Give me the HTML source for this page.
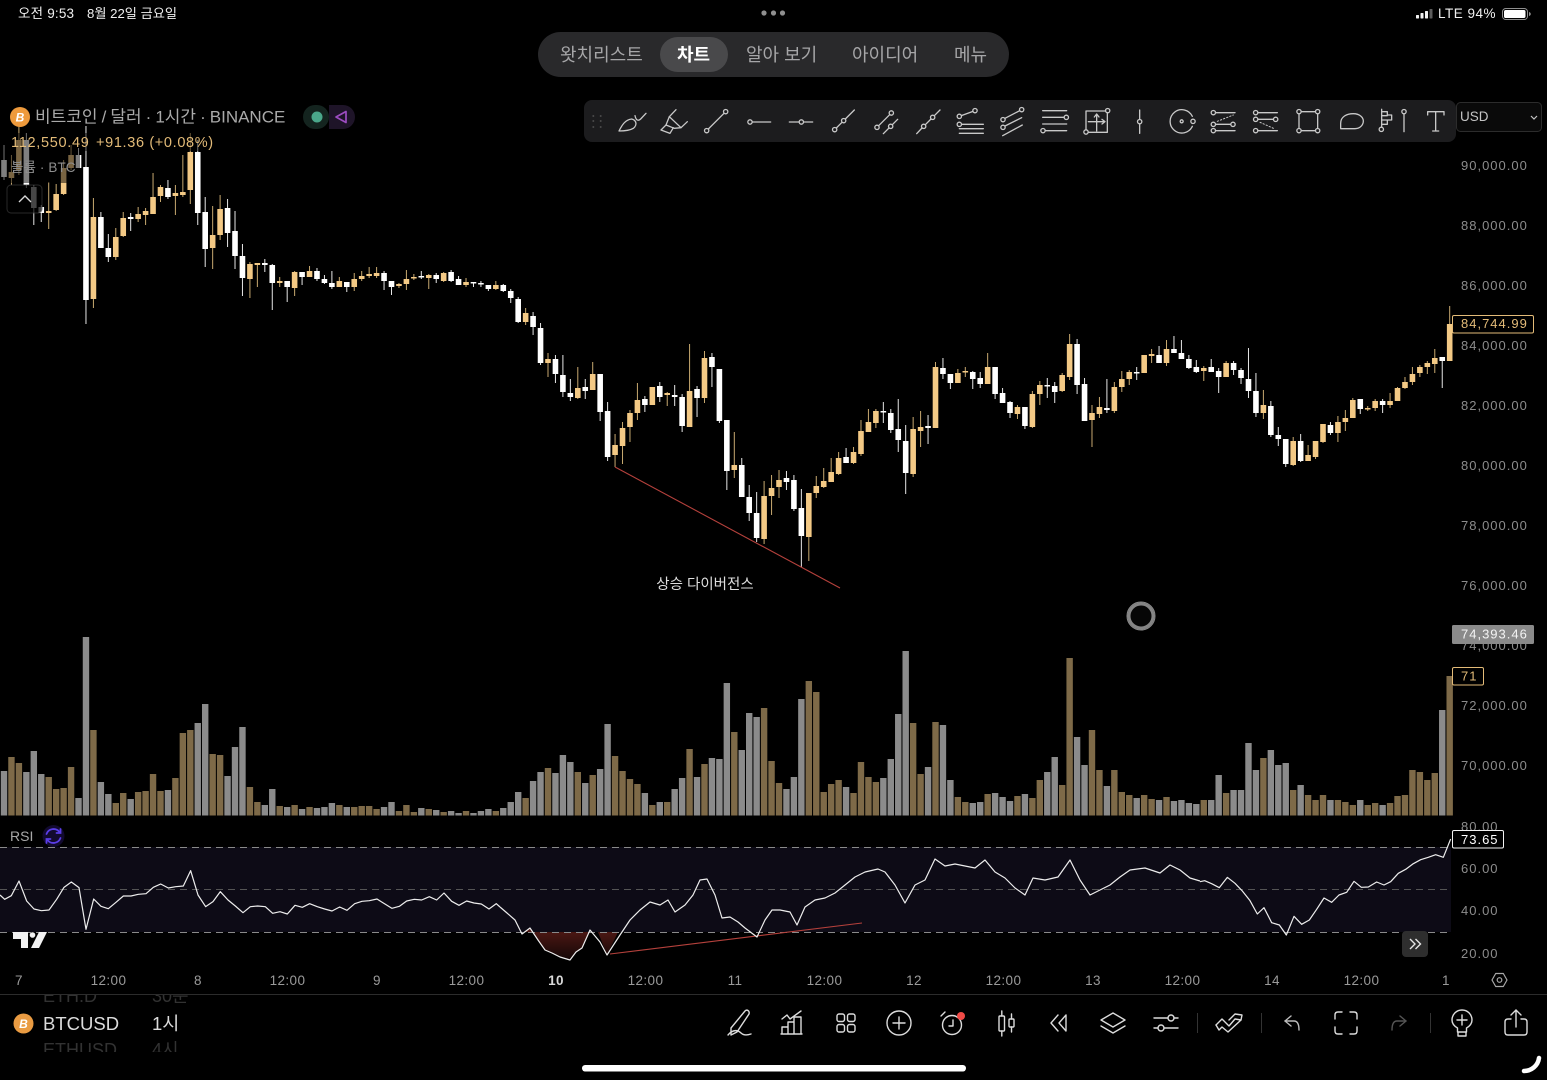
<!DOCTYPE html>
<html lang="ko">
<head>
<meta charset="utf-8">
<title>BTCUSD</title>
<style>
html,body{margin:0;padding:0;background:#000;width:1547px;height:1080px;overflow:hidden}
svg{display:block;position:absolute;left:0;top:0}
text{font-family:"Liberation Sans","Noto Sans CJK KR",sans-serif}
.ax{font-size:13px;fill:#8c8c8c;letter-spacing:1px}
.tm{font-size:13.5px;fill:#9a9a9a;text-anchor:middle;letter-spacing:.4px}
.nav{font-size:18px;fill:#a6a6a8}
.ic{fill:none;stroke:#c9c9c9;stroke-width:3.9;stroke-linecap:round;stroke-linejoin:round}
.bi{fill:none;stroke:#dcdcdc;stroke-width:1.4;stroke-linecap:round;stroke-linejoin:round}
</style>
</head>
<body>
<svg width="1547" height="1080" viewBox="0 0 1547 1080" xmlns="http://www.w3.org/2000/svg">
<defs>
<linearGradient id="rd" x1="0" y1="0" x2="0" y2="1"><stop offset="0" stop-color="#521a15"/><stop offset="1" stop-color="#140707"/></linearGradient>
</defs>
<rect width="1547" height="1080" fill="#000"/>

<!-- RSI band -->
<rect x="0" y="847" width="1451" height="85" fill="#0d0b16"/>
<path d="M524 932 L530 928 L538 940 L545 950 L552 953 L560 957 L570 960 L576 952 L582 948 L590 932 L598 932 L607 955 L618 932 Z" fill="url(#rd)"/>
<g stroke="#8a8a8a" stroke-width="1" stroke-dasharray="7 5" fill="none">
<path d="M0 847.5H1451"/><path d="M0 932.5H1451"/>
</g>
<path d="M0 889.5H1451" stroke="#555" stroke-width="1" stroke-dasharray="7 5" fill="none"/>

<!-- candles + volume -->
<path id="vW" fill="#8b8b8b"/>
<path id="vO" fill="#7e6a48"/>
<path id="wW" stroke="#e6e6e6" stroke-width="1" fill="none"/>
<path id="wO" stroke="#c8a970" stroke-width="1" fill="none"/>
<path id="bW" fill="#fff"/>
<path id="bO" fill="#f3c985"/>

<!-- divergence lines -->
<path d="M615 467 L840 588" stroke="#b5413c" stroke-width="1.1" fill="none"/>
<path d="M610 954 L862 923" stroke="#b5413c" stroke-width="1.1" fill="none"/>
<text x="705" y="589" font-size="14.5" fill="#dedede" text-anchor="middle">상승 다이버전스</text>

<!-- RSI lines -->
<g transform="translate(0,815) scale(.33333)">
<polyline fill="none" stroke="#ededed" stroke-width="3.6" stroke-linejoin="round" points="0,240 14,253 34,242 57,198 80,258 102,282 124,287 147,285 170,253 192,217 214,201 237,218 258,343 281,252 303,274 325,281 348,262 370,243 393,243 415,238 438,236 460,217 482,207 505,219 527,215 550,213 572,167 594,240 617,275 639,260 661,230 684,255 706,273 729,293 751,275 773,273 796,275 818,295 840,290 862,297 885,271 907,277 929,266 952,275 974,282 996,288 1019,276 1041,286 1064,266 1086,259 1108,257 1131,252 1153,266 1176,280 1198,274 1220,258 1243,253 1265,255 1288,245 1310,255 1332,234 1355,259 1377,271 1400,258 1422,264 1444,267 1467,282 1489,266 1500,276"/>
</g>
<polyline fill="none" stroke="#ededed" stroke-width="1.2" stroke-linejoin="round" points="500,907 507,913 515,920 522,934 530,928 538,940 545,950 552,953 560,957 570,960 576,952 582,948 590,930 600,942 607,955 620,935 630,920 640,910 650,902 660,905 668,900 675,912 685,905 693,895 700,880 707,879 715,895 722,918 730,917 738,922 745,928 757,937 765,920 772,910 780,910 790,912 797,925 805,907 815,900 825,898 835,893 845,885 855,877 865,872 878,869 885,872 895,885 905,903 915,885 925,880 935,859 945,866 955,864 965,866 975,868 985,860 995,872 1005,878 1015,888 1025,895 1033,878 1045,880 1058,877 1070,860 1080,880 1090,895 1100,890 1110,885 1120,877 1130,870 1145,868 1160,873 1170,865 1180,870 1190,878 1200,881"/>
<g transform="translate(1200,815) scale(.33333)">
<polyline fill="none" stroke="#ededed" stroke-width="3.6" stroke-linejoin="round" points="0,200 14,197 35,206 58,218 82,187 105,205 127,228 150,257 172,297 192,278 215,323 238,330 259,360 282,304 305,328 328,315 350,283 372,249 395,262 417,240 440,232 462,199 484,217 505,216 530,201 552,210 572,200 595,175 617,163 640,146 662,134 685,127 707,119 730,127 752,72"/>
</g>

<!-- dim overlays under legend -->
<rect x="80" y="133" width="135" height="18" fill="#000" opacity=".5"/>
<rect x="0" y="133" width="80" height="50" fill="#000" opacity=".5"/>
<rect x="7" y="185" width="35" height="28" rx="4" fill="#000" opacity=".72" stroke="#3a3a3a" stroke-width="1"/>
<path d="M19 202 L25 196 L31 202" fill="none" stroke="#d8d8d8" stroke-width="1.4"/>

<!-- status bar -->
<text x="18" y="18" font-size="13.5" fill="#f0f0f0" letter-spacing=".2">오전 9:53</text>
<text x="87" y="18" font-size="13.2" fill="#f0f0f0">8월 22일 금요일</text>
<g fill="#8f8f8f"><circle cx="764" cy="13" r="2.6"/><circle cx="773.5" cy="13" r="2.6"/><circle cx="782.5" cy="13" r="2.6"/></g>
<g fill="#f0f0f0"><rect x="1416" y="15" width="3" height="3.5" rx=".6"/><rect x="1420.5" y="13" width="3" height="5.5" rx=".6"/><rect x="1425" y="11" width="3" height="7.5" rx=".6"/></g>
<rect x="1429.5" y="9" width="3" height="9.5" rx=".6" fill="#5c5c5c"/>
<text x="1438" y="18" font-size="13.5" fill="#f0f0f0" letter-spacing=".5">LTE 94%</text>
<rect x="1502.5" y="8.5" width="25" height="11" rx="3.2" fill="none" stroke="#8f8f8f"/>
<rect x="1504" y="10" width="21.5" height="8" rx="1.8" fill="#fff"/>
<path d="M1529 12v4c1-.3 1.8-1 1.8-2s-.8-1.700-1.800-2z" fill="#8f8f8f"/>

<!-- nav pill -->
<rect x="538" y="32" width="471" height="45" rx="22.500" fill="#29292b"/>
<rect x="660" y="37" width="68" height="35" rx="17.500" fill="#49494b"/>
<text x="560" y="61" class="nav">왓치리스트</text>
<text x="677" y="61" font-size="18" font-weight="700" fill="#fff">차트</text>
<text x="746" y="61" class="nav">알아 보기</text>
<text x="852" y="61" class="nav">아이디어</text>
<text x="954" y="61" class="nav">메뉴</text>

<!-- legend -->
<circle cx="20" cy="117" r="10" fill="#ee9a3c"/>
<text x="20" y="121.500" font-size="12" font-weight="700" font-style="italic" fill="#fff" text-anchor="middle">B</text>
<text x="35" y="122.500" font-size="17" fill="#a9a9a9" word-spacing="-.7">비트코인 / 달러 · 1시간 · BINANCE</text>
<rect x="303" y="105" width="26" height="24" rx="12" fill="#14241f"/>
<path d="M329 105h14a12 12 0 0 1 0 24h-14z" fill="#1e1428"/>
<circle cx="317" cy="117" r="5.500" fill="#4aa78a"/>
<path d="M346 111.500 L336 117 L346 122.500 Z" fill="none" stroke="#9c4cc0" stroke-width="1.700" stroke-linejoin="round"/>
<text x="11" y="147" font-size="14.500" fill="#e3bb78" letter-spacing=".7">112,550.49</text>
<text x="96" y="147" font-size="14.500" fill="#e3bb78" letter-spacing=".65">+91.36 (+0.08%)</text>
<text x="11" y="172" font-size="13.500" fill="#8f8f8f" letter-spacing=".1">볼륨 · BTC</text>

<!-- toolbar -->
<rect x="584" y="100" width="872" height="42" rx="8" fill="#1c1c1e"/>
<g fill="#4a4a4a"><circle cx="593.300" cy="116" r="1"/><circle cx="600.700" cy="116" r="1"/><circle cx="593.300" cy="121" r="1"/><circle cx="600.700" cy="121" r="1"/><circle cx="593.300" cy="127" r="1"/><circle cx="600.700" cy="127" r="1"/></g>
<g transform="translate(580,95) scale(.33333)" class="ic">
<!-- brush -->
<path d="M117 108 C125 92 135 74 155 72 C170 76 172 90 160 100 C150 106 130 108 117 108 Z"/>
<path d="M165 62 C168 78 176 78 182 72 L198 55"/>
<!-- highlighter -->
<path d="M288 44 L268 65 L258 90 L283 100 L303 98 L322 80"/><path d="M268 65 L303 98"/><path d="M258 90 L243 105 L270 115 L280 98"/>
<!-- trend -->
<circle cx="380" cy="107" r="6.500"/><circle cx="437" cy="50" r="6.500"/><path d="M385 102 L432 55"/>
<!-- ray -->
<circle cx="510" cy="81" r="6.500"/><path d="M517 81 H572"/>
<!-- horizontal -->
<circle cx="664" cy="81" r="6.500"/><path d="M628 81 H657 M671 81 H698"/>
<!-- ext -->
<circle cx="764" cy="104" r="6.500"/><circle cx="791" cy="77" r="6.500"/><path d="M769 99 L786 82 M796 72 L823 45"/>
<!-- parallel -->
<circle cx="891" cy="97" r="6.500"/><circle cx="934" cy="54" r="6.500"/><path d="M896 92 L929 59"/><circle cx="932" cy="94" r="6.500"/><path d="M910 116 L927 99 M937 89 L953 73"/>
<!-- extended 2 -->
<circle cx="1031" cy="94" r="6.500"/><circle cx="1058" cy="67" r="6.500"/><path d="M1010 116 L1026 99 M1036 89 L1053 72 M1063 62 L1080 45"/>
<!-- fib -->
<circle cx="1138" cy="64" r="6.500"/><circle cx="1185" cy="47" r="6.500"/><path d="M1144 62 L1179 49"/><circle cx="1138" cy="88" r="6.500"/><path d="M1145 88 H1210 M1138 101 H1210 M1138 115 H1210"/>
<!-- channel -->
<circle cx="1269" cy="74" r="6.500"/><circle cx="1325" cy="44" r="6.500"/><circle cx="1269" cy="97" r="6.500"/><path d="M1275 70 L1319 47 M1275 93 L1325 68 M1268 122 L1327 90"/>
<!-- lines -->
<path d="M1388 47 H1460 M1388 67 H1452 M1388 87 H1460 M1396 107 H1460"/><circle cx="1459" cy="67" r="6.500"/><circle cx="1389" cy="107" r="6.500"/>
</g>
<g transform="translate(1070,95) scale(.33333)" class="ic">
<path d="M107 48 H48 V105 M54 112 H112 V53"/><circle cx="113" cy="47" r="6.500"/><circle cx="48" cy="111" r="6.500"/><path d="M80 108 V57 M73 66 L80 57 L87 66 M55 80 H105 M96 73 L105 80 L96 87"/>
<path d="M209 45 V73 M209 87 V115"/><circle cx="209" cy="80" r="6.500"/>
<path d="M367 64 A35 35 0 1 0 367 94"/><circle cx="335" cy="79" r="4.500"/><circle cx="369" cy="79" r="6.500"/>
<circle cx="430" cy="53" r="6.500"/><path d="M437 53 H495"/><circle cx="430" cy="88" r="6.500"/><circle cx="489" cy="88" r="6.500"/><path d="M437 88 H482"/><circle cx="430" cy="107" r="6.500"/><path d="M437 107 H495"/><path d="M442 79 L490 60" stroke-dasharray="4 6" stroke-width="3"/>
<circle cx="557" cy="53" r="6.500"/><path d="M564 53 H622"/><circle cx="557" cy="73" r="6.500"/><circle cx="617" cy="73" r="6.500"/><path d="M564 73 H610"/><circle cx="557" cy="107" r="6.500"/><path d="M564 107 H622"/><path d="M570 82 L615 102" stroke-dasharray="4 6" stroke-width="3"/>
<circle cx="687" cy="50" r="6.500"/><circle cx="743" cy="50" r="6.500"/><circle cx="687" cy="107" r="6.500"/><circle cx="743" cy="107" r="6.500"/><path d="M694 50 H736 M694 107 H736 M687 57 V100 M743 57 V100"/>
<path d="M812 101 V85 C812 65 830 56 850 56 C870 56 880 68 880 78 C880 90 870 101 855 101 Z"/>
<path d="M935 43 V96"/><circle cx="934" cy="103" r="6.500"/><path d="M935 50 H952 V60 H965 V75 H952 V88 H935 M935 62 H952 M935 75 H952"/>
<circle cx="1002" cy="50" r="6.500"/><path d="M1002 57 V110"/>
<path d="M1073 60 V50 H1122 V60 M1097 50 V108 M1088 108 H1106"/>
</g>
<rect x="1456.500" y="102.500" width="85" height="29" rx="4" fill="#0a0a0a" stroke="#2c2c2c"/>
<text x="1460" y="121" font-size="13.500" fill="#c4c4c4">USD</text>
<path d="M1531 116 L1534 119 L1537 116" fill="none" stroke="#c4c4c4" stroke-width="1.200"/>

<!-- price axis -->
<g class="ax">
<text x="1461" y="170">90,000.00</text><text x="1461" y="230">88,000.00</text><text x="1461" y="290">86,000.00</text><text x="1461" y="350">84,000.00</text><text x="1461" y="410">82,000.00</text><text x="1461" y="470">80,000.00</text><text x="1461" y="530">78,000.00</text><text x="1461" y="590">76,000.00</text><text x="1461" y="650">74,000.00</text><text x="1461" y="710">72,000.00</text><text x="1461" y="770">70,000.00</text>
<text x="1461" y="831">80.00</text><text x="1461" y="873">60.00</text><text x="1461" y="915">40.00</text><text x="1461" y="958">20.00</text>
</g>
<rect x="1452.500" y="315.500" width="81" height="17.500" rx="1.500" fill="#000" stroke="#e3bb78"/>
<text x="1461" y="328" font-size="13" fill="#e3bb78" letter-spacing="1">84,744.99</text>
<rect x="1452" y="625" width="82" height="19" rx="1.500" fill="#8a8a8a"/>
<text x="1461" y="638.500" font-size="13" fill="#f4f4f4" letter-spacing="1">74,393.46</text>
<rect x="1452.500" y="667.500" width="31" height="17.500" rx="1.500" fill="#000" stroke="#e3bb78"/>
<text x="1461" y="680.500" font-size="13" fill="#e3bb78" letter-spacing="1">71</text>
<rect x="1452.500" y="830.500" width="51" height="17.500" rx="1.500" fill="#000" stroke="#f2f2f2"/>
<text x="1461" y="844" font-size="13" fill="#fff" letter-spacing="1">73.65</text>

<!-- RSI label -->
<text x="10" y="841" font-size="14" fill="#a8a8a8">RSI</text>
<circle cx="53.500" cy="836" r="11" fill="#120a2e"/>
<g fill="none" stroke="#5a3de6" stroke-width="1.800" stroke-linecap="round">
<path d="M46.500 834 A7.500 7.500 0 0 1 59.500 832"/><path d="M60.500 838 A7.500 7.500 0 0 1 47.500 840"/>
<path d="M60.500 829 V833 H56.500"/><path d="M46.500 843 V839 H50.500"/>
</g>
<!-- TV logo -->
<path d="M13 932 H28 V948 H21 V939 H13 Z M39 932 H47 L39 948 H31 Z" fill="#f2f2f2"/>
<circle cx="32.500" cy="935" r="2.800" fill="#f2f2f2"/>
<!-- >> button -->
<rect x="1402" y="931" width="26" height="26" rx="4" fill="#2e2e2e"/>
<path d="M1410 939 L1415 944 L1410 949 M1415.500 939 L1420.500 944 L1415.500 949" fill="none" stroke="#e6e6e6" stroke-width="1.400"/>

<!-- time axis -->
<g class="tm">
<text x="19" y="985">7</text><text x="108.500" y="985">12:00</text><text x="198" y="985">8</text><text x="287.500" y="985">12:00</text><text x="377" y="985">9</text><text x="466.500" y="985">12:00</text>
<text x="556" y="985" font-weight="700" style="fill:#d8d8d8">10</text>
<text x="645.500" y="985">12:00</text><text x="735" y="985">11</text><text x="824.500" y="985">12:00</text><text x="914" y="985">12</text><text x="1003.500" y="985">12:00</text><text x="1093" y="985">13</text><text x="1182.500" y="985">12:00</text><text x="1272" y="985">14</text><text x="1361.500" y="985">12:00</text><text x="1446" y="985">1</text>
</g>
<path d="M1492 980 L1495.700 973.500 H1503.300 L1507 980 L1503.300 986.500 H1495.700 Z" fill="none" stroke="#a8a8a8" stroke-width="1.200" stroke-linejoin="round"/>
<circle cx="1499.500" cy="980" r="2.300" fill="none" stroke="#a8a8a8" stroke-width="1.200"/>

<!-- bottom bar -->
<rect x="0" y="994" width="1547" height="1" fill="#2c2c2c"/>
<svg x="0" y="995" width="400" height="57" viewBox="0 995 400 57">
<text x="43" y="1002" font-size="18" fill="#323232">ETH.D</text><text x="152" y="1002" font-size="18" fill="#323232">30분</text>
<text x="43" y="1056" font-size="18" fill="#323232">ETHUSD</text><text x="152" y="1056" font-size="18" fill="#323232">4시</text>
</svg>
<circle cx="23.500" cy="1023.500" r="10" fill="#e99b42"/>
<text x="23.500" y="1028" font-size="12" font-weight="700" font-style="italic" fill="#fff" text-anchor="middle">B</text>
<text x="43" y="1030" font-size="18.500" fill="#dcdcdc">BTCUSD</text>
<text x="152" y="1030" font-size="18.500" fill="#dcdcdc">1시</text>

<g class="bi">
<g transform="translate(739,1023)"><path d="M6 -12 C8 -14 11 -12 10 -9 L-2 9 L-8 12 L-8 5 Z"/><path d="M-11 12 C-6 6 -1 7 2 10 C5 13 9 12 12 11"/></g>
<g transform="translate(792,1023)"><path d="M-10 -4 L-5 -8 L-2 -4 L9 -12"/><path d="M-10 11 V4 H-4 V11 M-4 11 V-1 H2 V11 M2 11 V-6 H9 V11 M-11 11 H10"/></g>
<g transform="translate(846,1023)"><rect x="-9" y="-9" width="7.500" height="7.500" rx="2"/><rect x="1.500" y="-9" width="7.500" height="7.500" rx="2"/><rect x="-9" y="1.500" width="7.500" height="7.500" rx="2"/><rect x="1.500" y="1.500" width="7.500" height="7.500" rx="2"/></g>
<g transform="translate(899,1023)"><circle r="12"/><path d="M-6 0 H6 M0 -6 V6"/></g>
<g transform="translate(952,1023)"><circle cy="2" r="9.500"/><path d="M1 -3 V3 H-3"/><path d="M-11 -7 L-7 -11"/></g>
<g transform="translate(1006,1023)"><rect x="-7" y="-7" width="5.500" height="15" rx="1"/><path d="M-4.200 -12 V-7 M-4.200 8 V13"/><rect x="3" y="-4" width="5" height="8" rx="1"/><path d="M5.500 -9 V-4 M5.500 4 V9"/></g>
<g transform="translate(1059,1023)"><path d="M-1 -8 L-8 0 L-1 8"/><path d="M7 -8 L0 0 L7 8 Z"/></g>
<g transform="translate(1113,1023)"><path d="M0 -10 L12 -3 L0 4 L-12 -3 Z"/><path d="M-12 3 L0 10 L12 3"/></g>
<g transform="translate(1166,1023)"><path d="M-12 -5 H2 M8 -5 H12"/><circle cx="5" cy="-5" r="3"/><path d="M-12 5 H-8 M-2 5 H12"/><circle cx="-5" cy="5" r="3"/></g>
<g transform="translate(1229,1023)"><path d="M-13 2 L-7 -4 L0 3 L6 -4 L12 -3 L13 -8 L6 -9 L0 -3"/><path d="M-13 2 L-10 7 L-7 4 L-1 9 L12 -3"/></g>
<g transform="translate(1292,1023)" style="stroke:#bcbcbc"><path d="M-1 -7 L-7 -2 L-1 3"/><path d="M-7 -2 H2 C6 -2 7 2 7 7"/></g>
<g transform="translate(1346,1023)"><path d="M-4 -11 H-8 Q-11 -11 -11 -8 V-4 M4 -11 H8 Q11 -11 11 -8 V-4 M-4 11 H-8 Q-11 11 -11 8 V4 M4 11 H8 Q11 11 11 8 V4"/></g>
<g transform="translate(1399,1023)" style="stroke:#555"><path d="M1 -7 L7 -2 L1 3"/><path d="M7 -2 H-2 C-6 -2 -7 2 -7 7"/></g>
<g transform="translate(1462,1023)"><path d="M-4.500 5 C-8 3 -10 0 -10 -3 A10 10 0 0 1 10 -3 C10 0 8 3 4.500 5 V9 H-4.500 Z"/><path d="M-5 -3 H5 M0 -8 V2"/><path d="M-4 9 V13 H4 V9"/></g>
<g transform="translate(1516,1023)"><path d="M0 -13 V4 M-5 -8 L0 -13 L5 -8"/><path d="M-5 -4 H-8 Q-11 -4 -11 -1 V9 Q-11 12 -8 12 H8 Q11 12 11 9 V-1 Q11 -4 8 -4 H5"/></g>
</g>
<circle cx="961" cy="1016" r="4" fill="#f04a46"/>
<rect x="1197" y="1013" width="1" height="20" fill="#333"/>
<rect x="1261" y="1013" width="1" height="20" fill="#333"/>
<rect x="1430" y="1013" width="1" height="20" fill="#333"/>

<!-- cursor ring -->
<circle cx="1141" cy="616" r="12" fill="#060606" stroke="#858585" stroke-width="3"/>
<circle cx="1141" cy="616" r="14" fill="none" stroke="#c8c8c8" stroke-width="1" opacity=".7"/>

<!-- home bar -->
<rect x="582" y="1065" width="384" height="6.500" rx="3.200" fill="#fff"/>
<path d="M1539 1058 C1538 1066 1531 1071 1524 1071" fill="none" stroke="#fff" stroke-width="4.500" stroke-linecap="round"/>
</svg>
<script>
var C=[[160,177,145,180,0],[172,178,155,185,1],[140,170,127,175,1],[140,185,133,188,0],[187,208,185,225,0],[207,213,205,222,0],[211,213,182,229,1],[194,210,184,211,1],[168,194,160,195,1],[155,168,145,170,1],[155,168,148,168,0],[167,300,126,324,0],[217,299,198,308,1],[217,248,212,248,0],[248,257,234,262,0],[237,257,228,260,1],[218,236,212,237,1],[217,219,213,231,0],[214,219,207,222,1],[211,215,208,225,1],[197,214,173,214,1],[187,196,185,202,1],[188,197,180,199,0],[193,196,185,215,1],[192,195,155,197,1],[152,190,133,204,1],[152,213,140,225,0],[212,249,197,267,0],[235,248,206,269,1],[209,235,195,240,1],[208,233,199,247,0],[231,256,211,269,0],[256,278,244,296,0],[264,279,262,298,1],[263,265,263,287,1],[263,265,259,272,0],[265,283,264,310,0],[281,283,277,287,1],[281,287,281,302,0],[272,288,271,296,1],[272,277,272,285,0],[271,277,266,277,1],[271,279,268,281,0],[279,283,275,284,0],[283,287,271,289,0],[281,287,277,287,1],[282,287,282,292,0],[279,287,273,291,1],[276,279,271,281,1],[274,276,267,278,1],[273,276,267,278,1],[273,281,271,290,0],[281,287,281,295,0],[284,286,283,288,1],[279,284,270,290,1],[277,278,274,280,1],[276,277,271,279,0],[275,278,274,289,1],[275,279,273,283,0],[273,281,272,282,1],[272,281,270,282,0],[279,285,276,285,0],[282,285,278,287,1],[282,283,282,287,0],[283,284,281,287,0],[285,289,285,291,0],[285,289,281,290,1],[285,291,284,292,0],[291,298,289,303,0],[299,322,297,323,0],[313,322,308,325,1],[316,327,312,335,0],[328,363,323,365,0],[359,363,353,377,1],[359,374,355,383,0],[375,392,355,397,0],[393,397,379,401,0],[388,398,367,399,1],[387,391,379,399,0],[374,390,362,390,1],[374,412,374,421,0],[411,457,402,461,0],[445,455,434,467,1],[428,446,422,464,1],[413,427,410,442,1],[400,413,383,420,1],[399,405,396,412,0],[387,405,387,405,1],[386,397,382,402,0],[393,395,392,406,1],[395,397,385,406,0],[397,426,394,432,0],[391,427,344,427,1],[389,398,386,417,0],[358,398,351,403,1],[357,367,353,387,0],[369,421,369,423,0],[420,471,420,490,0],[465,470,432,478,1],[465,497,458,497,0],[497,513,485,521,0],[513,538,492,542,0],[496,539,481,544,1],[488,496,475,515,1],[480,487,470,498,1],[478,482,471,490,0],[480,509,475,511,0],[508,536,489,567,0],[493,537,493,561,1],[486,493,476,498,1],[481,487,468,488,1],[472,482,458,482,1],[458,474,452,475,1],[457,463,448,463,0],[452,463,447,464,1],[431,454,420,456,1],[422,432,409,432,1],[411,423,409,428,1],[411,412,402,423,0],[413,430,409,433,0],[429,440,399,452,0],[441,473,425,494,0],[429,474,417,477,1],[427,431,411,447,1],[426,428,415,444,0],[367,428,362,428,1],[368,374,358,379,0],[374,383,374,389,0],[373,383,369,383,1],[371,372,367,377,1],[372,379,371,389,0],[378,384,372,388,0],[367,384,353,384,1],[367,394,367,399,0],[393,403,388,403,0],[402,413,401,418,0],[407,414,405,419,1],[407,426,407,429,0],[394,427,391,428,1],[385,394,381,405,1],[385,386,378,398,0],[386,392,382,403,0],[375,391,373,392,1],[344,377,334,380,1],[344,385,339,394,0],[384,421,378,421,0],[413,420,405,447,1],[407,414,397,418,1],[408,410,379,413,0],[387,411,382,413,1],[379,387,371,392,1],[372,379,370,385,1],[372,373,367,380,0],[355,373,355,373,1],[354,356,349,363,1],[355,363,346,363,0],[349,363,340,366,1],[349,353,336,353,0],[353,359,340,359,0],[359,368,355,369,0],[367,372,360,373,0],[368,371,366,381,1],[367,372,359,372,0],[371,377,368,393,0],[363,377,361,377,1],[363,370,361,375,0],[370,378,368,384,0],[379,391,348,398,0],[391,413,373,417,0],[405,413,390,419,1],[406,435,401,437,0],[435,439,427,446,0],[439,464,439,467,0],[441,465,437,466,1],[441,461,434,462,0],[455,461,445,461,1],[441,457,441,459,1],[424,442,424,443,1],[425,433,422,435,0],[422,433,416,442,1],[418,422,410,431,1],[400,418,398,418,1],[399,409,399,414,0],[408,409,406,411,1],[401,408,399,411,1],[401,405,399,413,0],[401,405,393,408,1],[388,401,387,401,1],[382,388,377,389,1],[374,382,367,385,1],[367,373,365,377,1],[363,367,361,374,1],[358,364,349,373,1],[357,361,357,388,0],[324,361,306,361,1]];
var V=[771,757,763,772,751,774,777,789,788,767,798,637,730,782,794,803,793,799,792,791,774,791,790,778,733,730,723,704,754,755,776,747,727,787,802,805,789,806,807,805,809,807,808,807,803,805,807,807,806,806,809,807,802,811,805,812,808,809,810,812,811,813,811,813,811,809,811,808,802,792,798,781,772,768,773,755,762,772,783,775,769,724,756,771,779,784,793,805,802,802,789,778,749,777,764,758,759,683,732,750,713,717,708,761,783,789,777,699,681,692,792,784,780,787,793,762,777,782,778,759,714,651,723,774,767,722,725,780,797,802,803,802,794,793,797,801,796,794,798,780,772,757,785,658,737,765,730,770,786,770,792,795,798,795,799,800,797,801,800,803,804,800,800,775,793,790,790,743,770,758,750,765,763,790,785,795,800,795,800,800,802,805,800,805,803,805,803,796,795,770,772,780,773,710,676];
var p={wW:'',wO:'',bW:'',bO:'',vW:'',vO:''};
for(var i=0;i<C.length;i++){var c=C[i],x=+(4+7.452*i).toFixed(2),o=c[4]?'O':'W',b=c[1]-c[0]<1.5?c[0]+1.5:c[1];
p['w'+o]+='M'+x+' '+c[2]+'V'+c[3];
p['b'+o]+='M'+(x-2.8).toFixed(2)+' '+c[0]+'H'+(x+2.8).toFixed(2)+'V'+b+'H'+(x-2.8).toFixed(2)+'Z';
p['v'+o]+='M'+(x-3.2).toFixed(2)+' '+V[i]+'H'+(x+3.2).toFixed(2)+'V815.5H'+(x-3.2).toFixed(2)+'Z';}
for(var k in p)document.getElementById(k).setAttribute('d',p[k]);
</script>
</body>
</html>
